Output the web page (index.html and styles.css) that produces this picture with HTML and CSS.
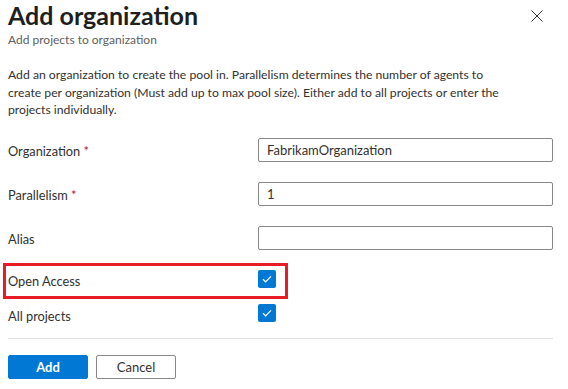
FILE: index.html
```html
<!DOCTYPE html>
<html lang="en">

<head>
  <meta charset="UTF-8">
  <meta name="viewport" content="width=device-width, initial-scale=1.0">
  <title>Add organization</title>
  <link rel="stylesheet" href="styles.css">
</head>

<body>

  <div class="panel">
    <div class="panel-header">
      <div>
        <h1>Add organization</h1>
        <div class="subtitle">Add projects to organization</div>
      </div>
      <button class="close" aria-label="Close">
        <svg width="12" height="12" viewBox="0 0 12 12">
          <path d="M0.5 0.5 L11.5 11.5 M11.5 0.5 L0.5 11.5" stroke="#323130" stroke-width="1" fill="none" />
        </svg>
      </button>
    </div>

    <p class="intro">Add an organization to create the pool in. Parallelism determines the number of agents to
      create per organization (Must add up to max pool size). Either add to all projects or enter the
      projects individually.</p>

    <div class="form">
      <div class="row">
        <label>Organization <span class="req">*</span></label>
        <input type="text" value="FabrikamOrganization">
      </div>
      <div class="row">
        <label>Parallelism <span class="req">*</span></label>
        <input type="text" value="1">
      </div>
      <div class="row">
        <label>Alias</label>
        <input type="text" value="">
      </div>
      <div class="row check-row highlight">
        <label>Open Access</label>
        <span class="checkbox">
          <svg width="12" height="12" viewBox="0 0 12 12">
            <path d="M2 6.3 L4.6 8.8 L10 3.4" stroke="#fff" stroke-width="1.2" fill="none" />
          </svg>
        </span>
      </div>
      <div class="row check-row">
        <label>All projects</label>
        <span class="checkbox">
          <svg width="12" height="12" viewBox="0 0 12 12">
            <path d="M2 6.3 L4.6 8.8 L10 3.4" stroke="#fff" stroke-width="1.2" fill="none" />
          </svg>
        </span>
      </div>
    </div>

    <div class="panel-footer">
      <button class="btn primary">Add</button>
      <button class="btn">Cancel</button>
    </div>
  </div>

</body>

</html>
```

FILE: styles.css
```css
body {
  font-family: "Segoe UI", Lato, sans-serif;
  margin: 0;
  padding: 0;
  background-color: #fff;
  color: #323130;
}

.panel {
  width: 545px;
  padding: 0 15px 0 8px;
}

.panel-header {
  display: flex;
  justify-content: space-between;
  align-items: flex-start;
}

.panel-header h1 {
  margin: 0;
  font-size: 25px;
  font-weight: 700;
  line-height: 30px;
  color: #201f1e;
}

.subtitle {
  margin-top: 3px;
  font-size: 12px;
  line-height: 14px;
  color: #605e5c;
}

.close {
  margin: 10px 10px 0 0;
  padding: 0;
  width: 12px;
  height: 12px;
  border: none;
  background: none;
  cursor: pointer;
}

.close svg {
  display: block;
}

.intro {
  width: 500px;
  margin: 19px 0 0;
  font-size: 12.2px;
  line-height: 17.5px;
}

.form {
  display: flex;
  flex-direction: column;
  margin-top: 19px;
}

.row {
  display: grid;
  grid-template-columns: 250px 295px;
  align-items: center;
  margin-bottom: 20px;
  font-size: 12.8px;
}

.row label {
  padding-top: 3px;
}

.row input {
  height: 24px;
  box-sizing: border-box;
  padding: 0 8px;
  border: 1px solid #8a8886;
  border-radius: 2px;
  font-family: inherit;
  font-size: 13px;
  color: #323130;
  outline: none;
}

.req {
  color: #a4262c;
}

.check-row {
  height: 18px;
  margin-bottom: 15px;
}

.check-row label {
  padding-top: 3px;
}

.check-row:last-child label {
  padding-top: 5px;
}

.highlight {
  position: relative;
}

.highlight::after {
  content: "";
  position: absolute;
  top: -7px;
  left: -5px;
  width: 285px;
  height: 36px;
  box-sizing: border-box;
  border: 3px solid #e81c24;
}

.checkbox {
  display: flex;
  align-items: center;
  justify-content: center;
  width: 18px;
  height: 18px;
  background-color: #0078d4;
  border-radius: 2px;
}

.panel-footer {
  display: flex;
  gap: 8px;
  margin-top: 2px;
  padding-top: 16px;
  border-top: 1px solid #e1dfdd;
}

.btn {
  width: 80px;
  height: 24px;
  padding: 0;
  background-color: #fff;
  border: 1px solid #8a8886;
  border-radius: 2px;
  font-family: inherit;
  font-size: 13px;
  color: #323130;
  cursor: pointer;
}

.btn.primary {
  background-color: #0078d4;
  border-color: #0078d4;
  color: #fff;
  font-weight: 700;
}
```
